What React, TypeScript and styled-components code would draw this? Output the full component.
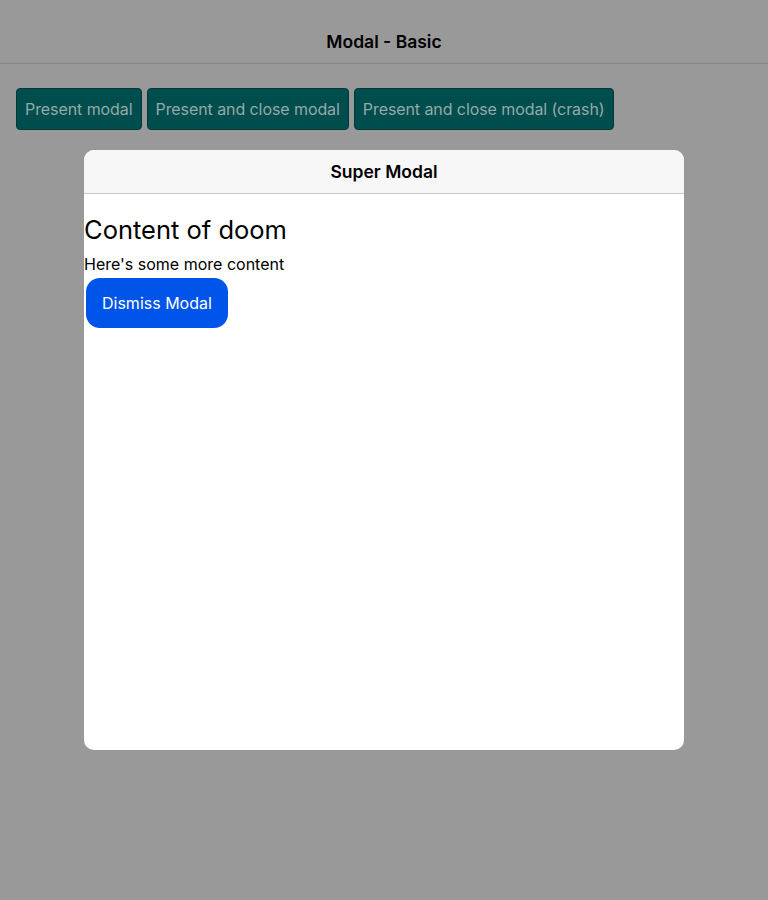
import React from "react";
import styled, { createGlobalStyle } from "styled-components";

const GlobalStyle = createGlobalStyle`
  html, body {
    margin: 0;
    padding: 0;
    height: 100%;
    background: #999999;
    font-family: Inter, "Noto Sans", "Liberation Sans", sans-serif;
  }
  #root {
    height: 100%;
  }
`;

const Page = styled.div`
  position: relative;
  width: 768px;
  height: 900px;
  background: #999999;
  overflow: hidden;
`;

const Toolbar = styled.header`
  height: 64px;
  box-sizing: border-box;
  padding-top: 20px;
  display: flex;
  align-items: center;
  justify-content: center;
  border-bottom: 1px solid #878787;
`;

const ToolbarTitle = styled.h1`
  margin: 0;
  font-size: 17.5px;
  font-weight: 600;
  color: #000;
`;

const Actions = styled.div`
  display: flex;
  gap: 5px;
  padding: 24px 16px 0;
`;

const ActionButton = styled.button`
  height: 42px;
  padding: 0 8px;
  border: 1px solid #003a3a;
  border-radius: 4px;
  background: #004d4d;
  color: #93aaa8;
  font-family: Inter, "Noto Sans", "Liberation Sans", sans-serif;
  font-size: 16px;
  font-weight: 400;
  letter-spacing: -0.08px;
`;

const Modal = styled.div`
  position: absolute;
  left: 84px;
  top: 150px;
  width: 600px;
  height: 600px;
  background: #fff;
  border-radius: 10px;
  overflow: hidden;
  display: flex;
  flex-direction: column;
`;

const ModalHeader = styled.div`
  height: 43px;
  background: #f7f7f7;
  border-bottom: 1px solid #c8c8c8;
  display: flex;
  align-items: center;
  justify-content: center;
`;

const ModalTitle = styled.h2`
  margin: 0;
  font-size: 17.5px;
  font-weight: 600;
  color: #000;
`;

const ModalBody = styled.div`
  display: flex;
  flex-direction: column;
  align-items: flex-start;
  padding-top: 17px;
`;

const Heading = styled.h2`
  margin: 0;
  font-size: 25.5px;
  font-weight: 400;
  line-height: 38px;
  color: #000;
`;

const Paragraph = styled.p`
  margin: 4px 0 0;
  font-size: 16px;
  line-height: 22px;
  color: #000;
`;

const DismissButton = styled.button`
  margin: 3px 0 0 2px;
  height: 50px;
  padding: 0 16px;
  border: none;
  border-radius: 14px;
  background: #0054e9;
  color: #fff;
  font-family: Inter, "Noto Sans", "Liberation Sans", sans-serif;
  font-size: 16px;
`;

export default function App() {
  return (
    <>
      <GlobalStyle />
      <Page>
        <Toolbar>
          <ToolbarTitle>Modal - Basic</ToolbarTitle>
        </Toolbar>
        <Actions>
          <ActionButton>Present modal</ActionButton>
          <ActionButton>Present and close modal</ActionButton>
          <ActionButton>Present and close modal (crash)</ActionButton>
        </Actions>
        <Modal>
          <ModalHeader>
            <ModalTitle>Super Modal</ModalTitle>
          </ModalHeader>
          <ModalBody>
            <Heading>Content of doom</Heading>
            <Paragraph>Here's some more content</Paragraph>
            <DismissButton>Dismiss Modal</DismissButton>
          </ModalBody>
        </Modal>
      </Page>
    </>
  );
}
